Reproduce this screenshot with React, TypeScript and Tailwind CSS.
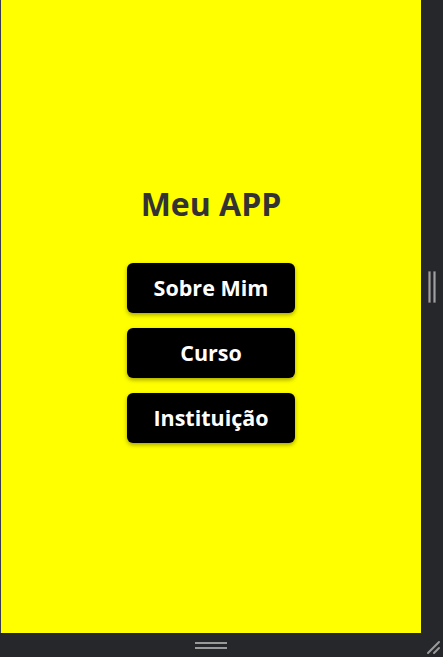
export default function App() {
  const items = ["Sobre Mim", "Curso", "Instituição"];

  return (
    <div className="relative flex h-[657px] w-[443px] flex-col bg-[#25272b] font-['Open_Sans',sans-serif]">
      <div className="flex h-[633px]">
        <div className="w-px bg-[#3a3d4a]" />
        <div className="flex flex-1 flex-col items-center bg-[#ffff00] pt-[182px]">
          <h1 className="mb-[38px] text-[32px] font-bold leading-[43px] text-[#333333]">
            Meu APP
          </h1>
          <div className="flex flex-col gap-[15px]">
            {items.map((label) => (
              <button
                key={label}
                className="h-[50px] w-[168px] rounded-[6px] bg-black text-[21.5px] font-bold text-white shadow-[0_2px_4px_rgba(0,0,0,0.35)]"
              >
                {label}
              </button>
            ))}
          </div>
        </div>
        {/* right resize strip */}
        <div className="flex w-[22px] justify-center gap-[2px] pt-[271px]">
          <div className="h-[32px] w-[3px] rounded-[1px] border border-[#6e6e6e] bg-[#a0a0a0]" />
          <div className="h-[32px] w-[3px] rounded-[1px] border border-[#6e6e6e] bg-[#a0a0a0]" />
        </div>
      </div>
      {/* bottom resize bar */}
      <div className="flex h-[24px] flex-col items-center justify-center gap-[3px] pr-[22px]">
        <div className="h-[2px] w-[32px] bg-[#9a9a9a]" />
        <div className="h-[2px] w-[32px] bg-[#9a9a9a]" />
      </div>
      <svg
        className="absolute bottom-[2px] right-[2px]"
        width="16"
        height="16"
        viewBox="0 0 16 16"
      >
        <path d="M3 14 L14 3 M9 14 L14 9" stroke="#9a9a9a" strokeWidth="2" strokeLinecap="round" />
      </svg>
    </div>
  );
}
